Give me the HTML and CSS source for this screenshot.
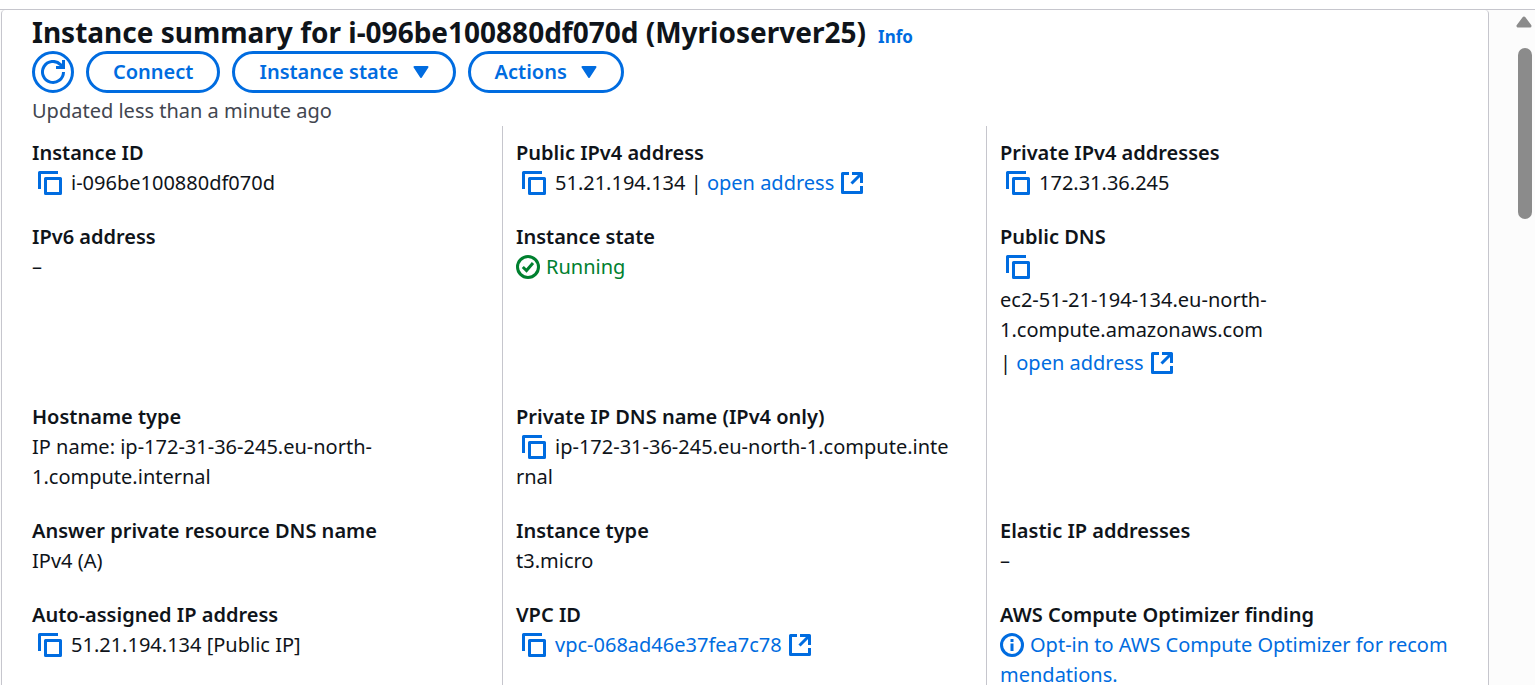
FILE: index.html
```html
<!DOCTYPE html>
<html lang="en">
<head>
<meta charset="utf-8">
<title>Instance summary</title>
<link rel="stylesheet" href="styles.css">
</head>
<body>
<svg class="sprite" aria-hidden="true">
  <symbol id="copy" viewBox="0 0 24 24"><path d="M1.5 18V1.5H20M7.5 7.5h15v15h-15z" fill="none" stroke="currentColor" stroke-width="3" stroke-linejoin="round"/></symbol>
  <symbol id="external" viewBox="0 0 22 22"><path d="M8 1.5H1.500v19h19V14M11 1.500h9.500V11M20 2l-9.500 9.500" fill="none" stroke="currentColor" stroke-width="3" stroke-linejoin="round"/></symbol>
  <symbol id="check" viewBox="0 0 24 24"><circle cx="12" cy="12" r="10.500" fill="none" stroke="currentColor" stroke-width="3"/><path d="M6.800 12l3.700 3.500 6.500-7.500" fill="none" stroke="currentColor" stroke-width="3"/></symbol>
  <symbol id="info" viewBox="0 0 24 24"><circle cx="12" cy="12" r="10.500" fill="none" stroke="currentColor" stroke-width="3"/><path d="M12 10.500v7.500M12 6v3" fill="none" stroke="currentColor" stroke-width="3"/></symbol>
  <symbol id="refresh" viewBox="0 0 24 24"><path d="M22.500 12A10.500 10.500 0 1 1 19.500 4.600L22 7.500M22.500 0v7.500H15" fill="none" stroke="currentColor" stroke-width="3"/></symbol>
  <symbol id="caret" viewBox="0 0 16 12"><path d="M1.500 1h13L8 11z" fill="currentColor" stroke="currentColor" stroke-width="2" stroke-linejoin="round"/></symbol>
</svg>
<div class="page">
  <main class="panel">
    <header class="header">
      <div class="heading"><h1 class="title">Instance summary for i-096be100880df070d (Myrioserver25)</h1><a class="info-link" href="#info">Info</a></div>
      <div class="actions">
        <button class="button button-round" type="button" aria-label="Refresh"><svg class="icon"><use href="#refresh"/></svg></button>
        <button class="button" type="button">Connect</button>
        <button class="button" type="button">Instance state<svg class="caret"><use href="#caret"/></svg></button>
        <button class="button" type="button">Actions<svg class="caret"><use href="#caret"/></svg></button>
      </div>
      <p class="updated">Updated less than a minute ago</p>
    </header>
    <dl class="details">
      <div class="cell"><dt>Instance ID</dt><dd><button class="copy" type="button" aria-label="Copy instance ID"><svg class="icon"><use href="#copy"/></svg></button>i-096be100880df070d</dd></div>
      <div class="cell"><dt>Public IPv4 address</dt><dd><button class="copy" type="button" aria-label="Copy public IPv4 address"><svg class="icon"><use href="#copy"/></svg></button>51.21.194.134 | <a href="#ip">open address<svg class="external"><use href="#external"/></svg></a></dd></div>
      <div class="cell"><dt>Private IPv4 addresses</dt><dd><button class="copy" type="button" aria-label="Copy private IPv4 address"><svg class="icon"><use href="#copy"/></svg></button>172.31.36.245</dd></div>

      <div class="cell"><dt>IPv6 address</dt><dd>–</dd></div>
      <div class="cell"><dt>Instance state</dt><dd class="running"><svg class="icon status"><use href="#check"/></svg>Running</dd></div>
      <div class="cell"><dt>Public DNS</dt><dd class="stack"><span><button class="copy" type="button" aria-label="Copy public DNS"><svg class="icon"><use href="#copy"/></svg></button></span><span>ec2-51-21-194-134.eu-north-<br>1.compute.amazonaws.com</span><span>| <a href="#dns">open address<svg class="external"><use href="#external"/></svg></a></span></dd></div>

      <div class="cell"><dt>Hostname type</dt><dd>IP name: ip-172-31-36-245.eu-north-<br>1.compute.internal</dd></div>
      <div class="cell"><dt>Private IP DNS name (IPv4 only)</dt><dd><button class="copy" type="button" aria-label="Copy private DNS name"><svg class="icon"><use href="#copy"/></svg></button>ip-172-31-36-245.eu-north-1.compute.inte<wbr>rnal</dd></div>
      <div class="cell"></div>

      <div class="cell"><dt>Answer private resource DNS name</dt><dd>IPv4 (A)</dd></div>
      <div class="cell"><dt>Instance type</dt><dd>t3.micro</dd></div>
      <div class="cell"><dt>Elastic IP addresses</dt><dd>–</dd></div>

      <div class="cell"><dt>Auto-assigned IP address</dt><dd><button class="copy" type="button" aria-label="Copy auto-assigned IP address"><svg class="icon"><use href="#copy"/></svg></button>51.21.194.134 [Public IP]</dd></div>
      <div class="cell"><dt>VPC ID</dt><dd><button class="copy" type="button" aria-label="Copy VPC ID"><svg class="icon"><use href="#copy"/></svg></button><a href="#vpc">vpc-068ad46e37fea7c78<svg class="external"><use href="#external"/></svg></a></dd></div>
      <div class="cell"><dt>AWS Compute Optimizer finding</dt><dd><a href="#optimizer"><svg class="icon status"><use href="#info"/></svg>Opt-in to AWS Compute Optimizer for recom<wbr>mendations.</a></dd></div>
    </dl>
  </main>
  <div class="scrollbar" aria-hidden="true">
    <svg class="scroll-up" viewBox="0 0 16 12"><path d="M2 10h12L8 2z" fill="currentColor" stroke="currentColor" stroke-width="3" stroke-linejoin="round"/></svg>
    <div class="thumb"></div>
  </div>
</div>
</body>
</html>
```
FILE: styles.css
```css
* { box-sizing: border-box; }

body {
  margin: 0;
  height: 100vh;
  overflow: hidden;
  display: flex;
  flex-direction: column;
  padding-top: 9px;
  background: #fff;
  color: #0f141a;
  font: 20px/30px "Noto Sans", "Open Sans", sans-serif;
}

.sprite { position: absolute; width: 0; height: 0; }

.page {
  flex: 1;
  min-height: 0;
  display: flex;
  padding-left: 1px;
  border-top: 1px solid #c6c6cd;
  background: #fcfcfc;
}

.panel {
  flex: 1;
  display: flex;
  flex-direction: column;
  padding: 5px 18px 0 16px;
  border: solid #c6c6cd;
  border-width: 0 1px;
  border-radius: 4px 4px 0 0;
  background: #fff;
}

.header { padding-left: 14px; }
.heading {
  display: flex;
  align-items: baseline;
  gap: 12px;
  margin-bottom: 2px;
}
.title { margin: 0; font-size: 28px; line-height: 34px; font-weight: 700; }
.info-link { font-size: 17px; line-height: 24px; font-weight: 700; }
a { color: #006ce0; text-decoration: none; }

.actions { display: flex; gap: 12px; }

.button {
  display: flex;
  align-items: center;
  gap: 14px;
  height: 42px;
  padding: 0 24px;
  border: 3px solid #006ce0;
  border-radius: 21px;
  background: #fff;
  color: #006ce0;
  font: inherit;
  font-weight: 600;
}
.button-round { width: 42px; padding: 0; justify-content: center; }
.caret { width: 16px; height: 12px; }
.updated { margin: 3px 0 0; color: #424650; }

.details {
  flex: 1 0 auto;
  display: grid;
  grid-template-columns: repeat(3, 1fr);
  margin: 0;
}
.cell {
  min-width: 0;
  padding: 12px 13px;
  border-left: 1px solid #c6c6cd;
}
.cell:nth-child(3n + 1) { border-left-color: transparent; }
dt { font-weight: 600; }
dd { margin: 0; }

.icon { width: 24px; height: 24px; vertical-align: -5px; }
.copy {
  display: inline-block;
  height: 24px;
  margin: 0 9px 0 6px;
  padding: 0;
  border: 0;
  background: none;
  color: #006ce0;
  vertical-align: -5px;
}
.copy .icon { display: block; }
.external {
  width: 22px;
  height: 22px;
  margin-left: 7px;
  vertical-align: -4px;
}
.status { margin-right: 6px; }
.running { color: #00802f; }
.stack { display: flex; flex-direction: column; gap: 3px; }

.scrollbar {
  width: 46px;
  display: flex;
  flex-direction: column;
  align-items: flex-end;
  gap: 20px;
  padding: 6px 3px;
  color: #8b8b8b;
}
.scroll-up { width: 16px; height: 12px; }
.thumb { width: 14px; height: 171px; border-radius: 7px; background: #8b8b8b; }
```
